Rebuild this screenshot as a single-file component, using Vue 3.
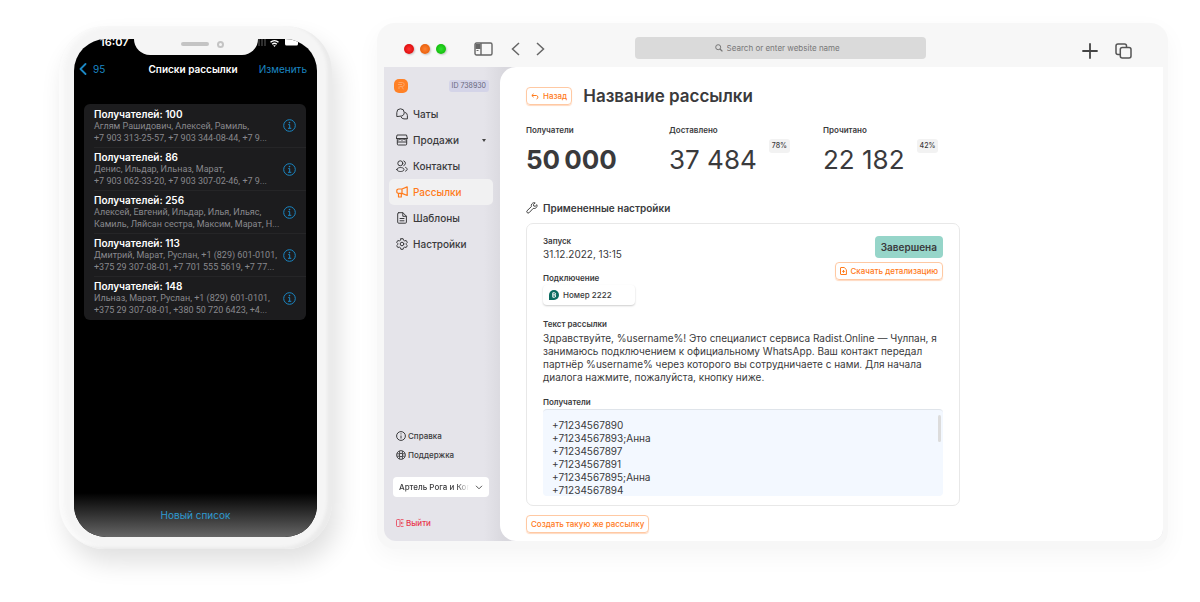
<script setup>
import { ref } from 'vue'

const lists = [
  { count: 100, lines: ['Аглям Рашидович, Алексей, Рамиль,', '+7 903 313-25-57, +7 903 344-08-44, +7 9...'] },
  { count: 86, lines: ['Денис, Ильдар, Ильназ, Марат,', '+7 903 062-33-20, +7 903 307-02-46, +7 9...'] },
  { count: 256, lines: ['Алексей, Евгений, Ильдар, Илья, Ильяс,', 'Камиль, Ляйсан сестра, Максим, Марат, Н...'] },
  { count: 113, lines: ['Дмитрий, Марат, Руслан, +1 (829) 601-0101,', '+375 29 307-08-01, +7 701 555 5619, +7 77...'] },
  { count: 148, lines: ['Ильназ, Марат, Руслан, +1 (829) 601-0101,', '+375 29 307-08-01, +380 50 720 6423, +4...'] },
]

const nav = [
  { id: 'chats', label: 'Чаты' },
  { id: 'sales', label: 'Продажи', caret: true },
  { id: 'contacts', label: 'Контакты' },
  { id: 'mailings', label: 'Рассылки', active: true },
  { id: 'templates', label: 'Шаблоны' },
  { id: 'settings', label: 'Настройки' },
]

const stats = [
  { label: 'Получатели', value: '50\u2009000', strong: true },
  { label: 'Доставлено', value: '37 484', share: '78%' },
  { label: 'Прочитано', value: '22 182', share: '42%' },
]

const company = ref('artel')
const recipients = ref(
  ['+71234567890', '+71234567893;Анна', '+71234567897', '+71234567891', '+71234567895;Анна', '+71234567894'].join('\n'),
)
</script>

<template>
  <div class="page">
    <section class="phone">
      <div class="screen">
        <div class="status">
          <span class="clock">16:07</span>
          <svg class="signals" width="42" height="9" viewBox="0 0 42 9">
            <path d="M2 0v7M5 0v7M8 0v7" stroke="#3a3a3a" stroke-width="1.6" />
            <path d="M13.5 3.2a6 6 0 0 1 8 0M15.2 5.2a3.4 3.4 0 0 1 4.6 0" fill="none" stroke="#fff" stroke-width="1.4" />
            <path d="M16.2 6.3h2.6L17.500 8z" fill="#fff" />
            <path d="M28 0h13v5a1.500 1.500 0 0 1-1.500 1.500h-10A1.500 1.500 0 0 1 28 5z" fill="#fff" />
          </svg>
        </div>
        <div class="notch">
          <span class="speaker"></span>
          <span class="camera"></span>
        </div>
        <header class="phone-nav">
          <button class="back" type="button">
            <svg width="8" height="12" viewBox="0 0 8 12"><path d="M6.500 1L1.500 6l5 5" fill="none" stroke="currentColor" stroke-width="1.8" stroke-linecap="round" stroke-linejoin="round" /></svg>
            <span>95</span>
          </button>
          <h2>Списки рассылки</h2>
          <button class="edit" type="button">Изменить</button>
        </header>
        <ul class="lists">
          <li v-for="item in lists" :key="item.count">
            <div class="list-text">
              <h3>Получателей: {{ item.count }}</h3>
              <p v-for="line in item.lines" :key="line">{{ line }}</p>
            </div>
            <button class="info" type="button" aria-label="Подробнее">
              <svg width="13" height="13" viewBox="0 0 13 13" fill="none" stroke="currentColor">
                <circle cx="6.500" cy="6.500" r="5.800" />
                <path d="M5.200 5.600h1.500v3.600M5 9.300h3.300" />
                <circle cx="6.500" cy="3.600" r=".8" fill="currentColor" stroke="none" />
              </svg>
            </button>
          </li>
        </ul>
        <footer class="phone-foot">
          <button type="button">Новый список</button>
        </footer>
      </div>
    </section>

    <section class="browser">
      <header class="toolbar">
        <div class="lights"><i class="red"></i><i class="orange"></i><i class="green"></i></div>
        <button class="tool side-toggle" type="button" aria-label="Боковая панель">
          <svg width="19" height="14" viewBox="0 0 19 14" fill="none" stroke="#666" stroke-width="1.400">
            <rect x="1" y="1" width="17" height="12" rx="1.500" />
            <path d="M7 1v12" />
            <path d="M1.500 2h5v5h-5z" fill="#666" stroke="none" />
            <path d="M2.500 8.500h2" stroke-width="1" />
          </svg>
        </button>
        <div class="arrows">
          <button class="tool" type="button" aria-label="Назад">
            <svg width="9" height="14" viewBox="0 0 9 14"><path d="M8 1L1.500 7 8 13" fill="none" stroke="#666" stroke-width="1.500" /></svg>
          </button>
          <button class="tool" type="button" aria-label="Вперёд">
            <svg width="9" height="14" viewBox="0 0 9 14"><path d="M1 1l6.500 6L1 13" fill="none" stroke="#666" stroke-width="1.500" /></svg>
          </button>
        </div>
        <label class="address">
          <svg width="8" height="8" viewBox="0 0 8 8" fill="none" stroke="#777"><circle cx="3.200" cy="3.200" r="2.500" /><path d="M5 5l2.400 2.400" stroke-width="1.300" /></svg>
          <input type="text" placeholder="Search or enter website name" aria-label="Адрес сайта" />
        </label>
        <div class="actions">
          <button class="tool" type="button" aria-label="Новая вкладка">
            <svg width="16" height="16" viewBox="0 0 16 16"><path d="M8 1v14M1 8h14" stroke="#444" stroke-width="1.800" stroke-linecap="round" /></svg>
          </button>
          <button class="tool" type="button" aria-label="Вкладки">
            <svg width="17" height="16" viewBox="0 0 17 16" fill="none" stroke="#555" stroke-width="1.500">
              <path d="M5 11.500H3A2 2 0 0 1 1 9.500V3a2 2 0 0 1 2-2h6.500a2 2 0 0 1 2 2v1.500" />
              <rect x="5.300" y="4.500" width="10.700" height="10.500" rx="2" />
            </svg>
          </button>
        </div>
      </header>

      <div class="app">
        <aside class="sidebar">
          <div class="account">
            <svg class="logo" width="14" height="14" viewBox="0 0 14 14">
              <rect width="14" height="14" rx="5" fill="#ff8126" />
              <path d="M4.500 3.500h3.700a2 2 0 0 1 0 4H5.500M4 5.500h4M5 10V7.500M7.500 7.500l2 2.800" fill="none" stroke="#ffa565" />
            </svg>
            <span class="account-id">ID 738930</span>
          </div>

          <nav class="menu">
            <a v-for="item in nav" :key="item.id" href="#" :class="{ active: item.active }">
              <svg width="12" height="12" viewBox="0 0 12 12" fill="none" stroke="currentColor" stroke-linecap="round" stroke-linejoin="round">
                <g v-if="item.id === 'chats'">
                  <path d="M.8 8.200V4.600A3.700 3.700 0 0 1 4.500.8a3.700 3.700 0 0 1 0 7.400z" />
                  <path d="M8.900 4.300A3.300 3.300 0 0 1 11.400 7.500v3.400H8a3.300 3.300 0 0 1-3-1.900" />
                </g>
                <g v-else-if="item.id === 'sales'">
                  <path d="M1.500 1h9L11.400 4.500H.6zM1.300 6v4a1 1 0 0 0 1 1h7.400a1 1 0 0 0 1-1V6" />
                  <path d="M.6 4.500c0 2 3.500 2 3.600 0 .1 2 3.500 2 3.600 0 .1 2 3.600 2 3.600 0M1.500 8h9" />
                </g>
                <g v-else-if="item.id === 'contacts'">
                  <circle cx="4.300" cy="3.300" r="2.500" />
                  <path d="M.8 9.500C.8 6.800 8 6.800 8 9.500S.8 12.300.8 9.500zM7.800.9a2.500 2.500 0 0 1 0 4.700M9.600 7.400c2.200.8 2.200 3 0 3.700" />
                </g>
                <g v-else-if="item.id === 'mailings'" stroke-width="1.200">
                  <path d="M6 3L11.200.9v8.600L6 7.400H2.500A1.700 1.700 0 0 1 .8 5.700v-1A1.700 1.700 0 0 1 2.500 3zM6 3v4.400M2.500 7.500V11h2.800V7.500" />
                </g>
                <g v-else-if="item.id === 'templates'">
                  <path d="M2.700.7h4.200l3.500 3.500v6a1 1 0 0 1-1 1H2.700a1 1 0 0 1-1-1v-8.500a1 1 0 0 1 1-1zM6.800.8v3.500h3.500M4 6.500h4M4 8.800h4" />
                </g>
                <g v-else>
                  <path d="M4.900.7h2.200l.4 1.500 1.200.7 1.500-.4 1.100 1.900-1.100 1.100v1l1.100 1.100-1.100 1.900-1.500-.4-1.200.7-.4 1.500H4.900l-.4-1.500-1.200-.7-1.500.4L.7 7.600l1.100-1.100v-1L.7 4.400l1.100-1.900 1.500.4 1.200-.7z" />
                  <circle cx="6" cy="6" r="1.800" />
                </g>
              </svg>
              <span>{{ item.label }}</span>
              <i v-if="item.caret" class="caret"></i>
            </a>
          </nav>

          <div class="help">
            <a href="#">
              <svg width="10" height="10" viewBox="0 0 10 10" fill="none" stroke="currentColor"><circle cx="5" cy="5" r="4.400" /><path d="M5 4.500v3M5 2.400v1" /></svg>
              Справка
            </a>
            <a href="#">
              <svg width="10" height="10" viewBox="0 0 10 10" fill="none" stroke="currentColor" stroke-width=".9"><circle cx="5" cy="5" r="4.400" /><circle cx="5" cy="5" r="1.700" /><path d="M3.600 1v2.800H1M6.400 1v2.800H9M3.600 9V6.200H1M6.400 9V6.200H9" /></svg>
              Поддержка
            </a>
          </div>

          <div class="company">
            <select v-model="company" aria-label="Компания">
              <option value="artel">Артель Рога и Копыта</option>
            </select>
            <svg width="8" height="5" viewBox="0 0 8 5"><path d="M1 .8l3 3 3-3" fill="none" stroke="#555" /></svg>
          </div>

          <a class="logout" href="#">
            <svg width="8" height="8" viewBox="0 0 8 8" fill="none" stroke="currentColor" stroke-width=".8"><path d="M3.500.5H1.500a1 1 0 0 0-1 1v5a1 1 0 0 0 1 1h2M4 .4v7.200M5 .6h2.500M5 7.400h2.500M7.500 4H5M6 2.800L4.900 4 6 5.200" /></svg>
            Выйти
          </a>
        </aside>

        <main class="content">
          <div class="heading">
            <button class="outline" type="button">
              <svg width="8" height="7" viewBox="0 0 8 7"><path d="M2.600.8L.8 2.500l1.800 1.700M1 2.500h4.500a1.800 1.800 0 0 1 0 3.500" fill="none" stroke="currentColor" /></svg>
              Назад
            </button>
            <h1>Название рассылки</h1>
          </div>

          <dl class="stats">
            <div v-for="stat in stats" :key="stat.label">
              <dt>{{ stat.label }}</dt>
              <dd>
                <span class="value" :class="{ strong: stat.strong }">{{ stat.value }}</span>
                <span v-if="stat.share" class="share">{{ stat.share }}</span>
              </dd>
            </div>
          </dl>

          <h2 class="section-title">
            <svg width="12" height="12" viewBox="0 0 12 12"><path d="M10.900 2.700L9.200 4.300 7.700 4 7.500 2.600 9.200.9C7.500.3 5.500 1.300 5.300 3.300c0 .5 0 .9.100 1.300L1 8.800c-1 1.200.8 3 2 2l4.200-4.400c2.300.6 4.500-1.200 3.700-3.700z" fill="none" stroke="#444" stroke-linejoin="round" /></svg>
            Примененные настройки
          </h2>

          <section class="card">
            <div class="card-top">
              <div>
                <h3>Запуск</h3>
                <p class="date">31.12.2022, 13:15</p>
                <h3 class="channel-title">Подключение</h3>
                <div class="channel">
                  <svg width="10" height="10" viewBox="0 0 10 10"><path d="M0 10V5a5 5 0 1 1 5 5z" fill="#0b6b60" /><path d="M3.800 2.800h1.700a1 1 0 0 1 0 2.100 1.100 1.100 0 0 1 0 2.300H3.800zM3.800 4.900h1.700" fill="none" stroke="#fff" /></svg>
                  Номер 2222
                </div>
              </div>
              <div class="card-side">
                <span class="state">Завершена</span>
                <button class="outline" type="button">
                  <svg width="7" height="8" viewBox="0 0 7 8" fill="none" stroke="currentColor"><path d="M1 .5h3.200L6.400 2.700v4.800H1a.5.500 0 0 1-.5-.5V1A.5.500 0 0 1 1 .5zM3.500 3v2.800M2.200 4.400h2.600" /></svg>
                  Скачать детализацию
                </button>
              </div>
            </div>

            <h3 class="text-title">Текст рассылки</h3>
            <p class="message">Здравствуйте, %username%! Это специалист сервиса Radist.Online — Чулпан, я занимаюсь подключением к официальному WhatsApp. Ваш контакт передал партнёр %username% через которого вы сотрудничаете с нами. Для начала диалога нажмите, пожалуйста, кнопку ниже.</p>

            <h3 class="recipients-title"><label for="recipients">Получатели</label></h3>
            <div class="recipients">
              <textarea id="recipients" v-model="recipients" rows="6" readonly></textarea>
              <i class="thumb"></i>
            </div>
          </section>

          <button class="outline repeat" type="button">Создать такую же рассылку</button>
        </main>
      </div>
    </section>
  </div>
</template>

<style>
body {
  margin: 0;
  background: #fff;
}
</style>

<style scoped>
* {
  box-sizing: border-box;
}
.page {
  display: grid;
  grid-template-columns: 273px minmax(0, 1fr);
  gap: 45px;
  min-height: 100vh;
  padding: 23px 32px 54px 59px;
  font-family: Inter, "Liberation Sans", sans-serif;
  color: #3a3a3c;
}
h1, h2, h3, p, ul, dl, dd {
  margin: 0;
  padding: 0;
}
button {
  margin: 0;
  padding: 0;
  border: 0;
  background: none;
  font: inherit;
  color: inherit;
}
a {
  color: inherit;
  text-decoration: none;
}
svg {
  display: block;
  flex: none;
}

/* Phone */
.phone {
  display: flex;
  margin-top: 3px;
  padding: 13px 15px 12px;
  border-radius: 46px;
  background: #f5f5f5;
  box-shadow: inset -5px -2px 3px #ebebeb, inset 5px 0 4px #fbfbfb, 6px 14px 24px rgba(0, 0, 0, 0.12);
}
.screen {
  position: relative;
  display: flex;
  flex: 1;
  flex-direction: column;
  min-width: 0;
  overflow: hidden;
  border-radius: 32px;
  background: #000;
  color: #fff;
}
.status {
  display: flex;
  justify-content: space-between;
  height: 9px;
  padding: 0 18px 0 26px;
}
.clock {
  font-size: 11px;
  font-weight: 600;
  line-height: 7px;
}
.notch {
  position: absolute;
  top: 0;
  left: 50%;
  display: flex;
  align-items: center;
  justify-content: center;
  gap: 8px;
  width: 124px;
  height: 16px;
  padding: 0 0 6px 14px;
  border-radius: 0 0 16px 16px;
  background: #f5f5f5;
  transform: translateX(-50%);
}
.speaker {
  width: 28px;
  height: 4px;
  border-radius: 2px;
  background: #c4c4c4;
}
.camera {
  width: 7px;
  height: 7px;
  border: 2px solid #c4c4c4;
  border-radius: 50%;
}
.phone-nav {
  display: grid;
  grid-template-columns: 1fr auto 1fr;
  align-items: center;
  height: 14px;
  margin-top: 14px;
  padding: 0 10px 0 5px;
  font-size: 10px;
  line-height: 14px;
  color: #1b87c4;
}
.phone-nav h2 {
  font-size: 10px;
  font-weight: 600;
  color: #fff;
}
.back {
  display: flex;
  align-items: center;
  gap: 6px;
}
.edit {
  justify-self: end;
}
.lists {
  margin: 28px 11px 0 10px;
  padding-bottom: 1px;
  border-radius: 6px;
  background: #1c1c1e;
  list-style: none;
}
.lists li {
  display: flex;
  align-items: center;
  justify-content: space-between;
  height: 43px;
  padding-right: 10px;
  margin-left: 10px;
}
.lists li + li {
  border-top: 1px solid #252527;
}
.list-text {
  min-width: 0;
  font-family: Roboto, Inter, sans-serif;
  font-size: 9px;
  line-height: 12px;
  white-space: nowrap;
  color: #88888d;
}
.lists h3 {
  font-family: Inter, "Liberation Sans", sans-serif;
  font-size: 10px;
  font-weight: 600;
  line-height: 12px;
  color: #fff;
}
.info {
  color: #1b87c4;
}
.phone-foot {
  display: flex;
  align-items: center;
  justify-content: center;
  height: 44px;
  margin-top: auto;
  background: linear-gradient(#000, #666);
  font-size: 10px;
  color: #2f9ad0;
}

/* Browser window */
.browser {
  display: flex;
  flex-direction: column;
  min-width: 0;
  padding: 0 5px 8px 7px;
  border-radius: 18px;
  background: #f7f7f7;
  box-shadow: 0 8px 24px rgba(0, 0, 0, 0.04);
}
.toolbar {
  display: flex;
  align-items: center;
  height: 44px;
  padding: 8px 31px 0 20px;
}
.tool {
  display: flex;
}
.lights {
  display: flex;
  gap: 6px;
}
.lights i {
  width: 10px;
  height: 10px;
  border-radius: 50%;
  box-shadow: 1px 1px 2px rgba(0, 0, 0, 0.2);
}
.red {
  background: radial-gradient(#f33, #d00000);
}
.orange {
  background: radial-gradient(#ff8030, #e05500);
}
.green {
  background: radial-gradient(#30e030, #0ab000);
}
.side-toggle {
  margin-left: 28px;
}
.arrows {
  display: flex;
  gap: 16px;
  margin-left: 18px;
}
.address {
  display: flex;
  align-items: center;
  justify-content: center;
  gap: 4px;
  width: 40%;
  height: 22px;
  margin: 0 auto 2px 90px;
  border-radius: 4px;
  background: #dadada;
}
.address input {
  width: 120px;
  padding: 0;
  border: 0;
  outline: 0;
  background: none;
  font: 8px/12px Inter, "Liberation Sans", sans-serif;
}
.address input::placeholder {
  color: #777;
  opacity: 1;
}
.actions {
  display: flex;
  gap: 17px;
  padding-top: 4px;
}
.app {
  display: flex;
  flex: 1;
  overflow: hidden;
  border-radius: 0 0 12px 12px;
  background: linear-gradient(90deg, #e5e4ea 100px, #d9d8de 120px);
}
.sidebar {
  display: flex;
  flex: none;
  flex-direction: column;
  width: 116px;
  padding: 12px 7px;
}
.account {
  display: flex;
  align-items: center;
  justify-content: space-between;
  height: 14px;
  padding: 0 4px 0 3px;
}
.account-id {
  padding: 0 3px;
  border-radius: 3px;
  background: #d4d4e8;
  font-size: 7px;
  line-height: 12px;
  color: #66667a;
}
.menu {
  margin: 8px 0 0 -2px;
}
.menu a {
  display: flex;
  align-items: center;
  gap: 5px;
  height: 26px;
  padding: 0 7px;
  border-radius: 5px;
  font-size: 10px;
  font-weight: 500;
}
.menu a.active {
  background: #f1f1f2;
  color: #ff7a1a;
}
.caret {
  margin-left: auto;
  border: 2px solid transparent;
  border-top: 3px solid #444;
  border-bottom: 0;
}
.help {
  display: flex;
  flex-direction: column;
  gap: 7px;
  margin-top: auto;
  padding-left: 5px;
  font-size: 8px;
  font-weight: 500;
  line-height: 12px;
}
.help a {
  display: flex;
  align-items: center;
  gap: 2px;
}
.company {
  display: flex;
  align-items: center;
  gap: 6px;
  height: 20px;
  margin: 16px 4px 0 2px;
  padding: 0 6px;
  border-radius: 4px;
  background: #fff;
}
.company select {
  flex: 1;
  min-width: 0;
  padding: 0;
  border: 0;
  outline: 0;
  appearance: none;
  background: none;
  font: 500 8px/12px Inter, "Liberation Sans", sans-serif;
  color: #3a3a3c;
  mask-image: linear-gradient(90deg, #000 82%, transparent);
}
.logout {
  display: flex;
  align-items: center;
  gap: 2px;
  margin-top: 20px;
  padding-left: 5px;
  font-size: 8px;
  font-weight: 500;
  line-height: 12px;
  color: #e8384f;
}
.content {
  flex: 1;
  min-width: 0;
  padding: 19px 26px 8px;
  border-radius: 16px 0 0 16px;
  background: #fff;
}
.heading {
  display: flex;
  align-items: center;
  gap: 11px;
}
.heading h1 {
  font-size: 17px;
  font-weight: 600;
  line-height: 20px;
}
.outline {
  display: flex;
  align-items: center;
  gap: 4px;
  height: 18px;
  padding: 0 4px;
  border: 1px solid #ffc9a3;
  border-radius: 4px;
  box-shadow: 0 1px 1px #ffd9c0;
  font-size: 8px;
  font-weight: 500;
  color: #ff7a1a;
  white-space: nowrap;
}
.stats {
  display: grid;
  grid-template-columns: 143px 154px auto;
  margin-top: 19px;
}
.stats dt {
  font-size: 8px;
  font-weight: 600;
  line-height: 10px;
}
.stats dd {
  display: flex;
  align-items: flex-start;
  gap: 12px;
  margin-top: 4px;
}
.value {
  margin-top: 6px;
  font-size: 26px;
  font-weight: 400;
  line-height: 30px;
}
.value.strong {
  font-weight: 700;
}
.share {
  padding: 0 3px;
  border-radius: 3px;
  background: #f2f2f2;
  font-size: 7px;
  font-weight: 500;
  line-height: 14px;
}
.section-title {
  display: flex;
  align-items: center;
  gap: 5px;
  margin-top: 26px;
  font-size: 10px;
  font-weight: 600;
  line-height: 14px;
}
.card {
  max-width: 434px;
  margin-top: 8px;
  padding: 12px 16px 9px;
  border: 1px solid #e8e8e8;
  border-radius: 7px;
}
.card h3 {
  font-size: 8px;
  font-weight: 600;
  line-height: 10px;
}
.card-top {
  display: flex;
  justify-content: space-between;
}
.date {
  margin-top: 2px;
  font-size: 10px;
  line-height: 13px;
}
.card .channel-title {
  margin-top: 12px;
}
.channel {
  display: flex;
  align-items: center;
  gap: 4px;
  width: 92px;
  height: 20px;
  margin-top: 2px;
  padding: 0 6px;
  border-radius: 4px;
  box-shadow: 0 1px 2px rgba(0, 0, 0, 0.2);
  font-size: 8px;
  font-weight: 500;
}
.card-side {
  display: flex;
  flex-direction: column;
  align-items: flex-end;
  gap: 4px;
}
.state {
  padding: 0 6px;
  border-radius: 4px;
  background: #96d5c9;
  font-size: 10px;
  font-weight: 600;
  line-height: 22px;
}
.card .text-title {
  margin-top: 14px;
}
.message {
  margin-top: 3px;
  font-size: 10px;
  line-height: 13px;
}
.card .recipients-title {
  margin-top: 13px;
}
.recipients {
  position: relative;
  margin-top: 2px;
}
.recipients textarea {
  display: block;
  width: 100%;
  height: 87px;
  padding: 9px;
  border: 0;
  border-top: 1px solid #dfe4ea;
  border-radius: 4px;
  outline: 0;
  overflow: hidden;
  resize: none;
  background: #f3f8ff;
  font: 10px/13px Inter, "Liberation Sans", sans-serif;
  color: #3a3a3c;
}
.thumb {
  position: absolute;
  top: 6px;
  right: 2px;
  width: 3px;
  height: 27px;
  border-radius: 2px;
  background: #dcdcdc;
}
.repeat {
  margin-top: 9px;
}
</style>
